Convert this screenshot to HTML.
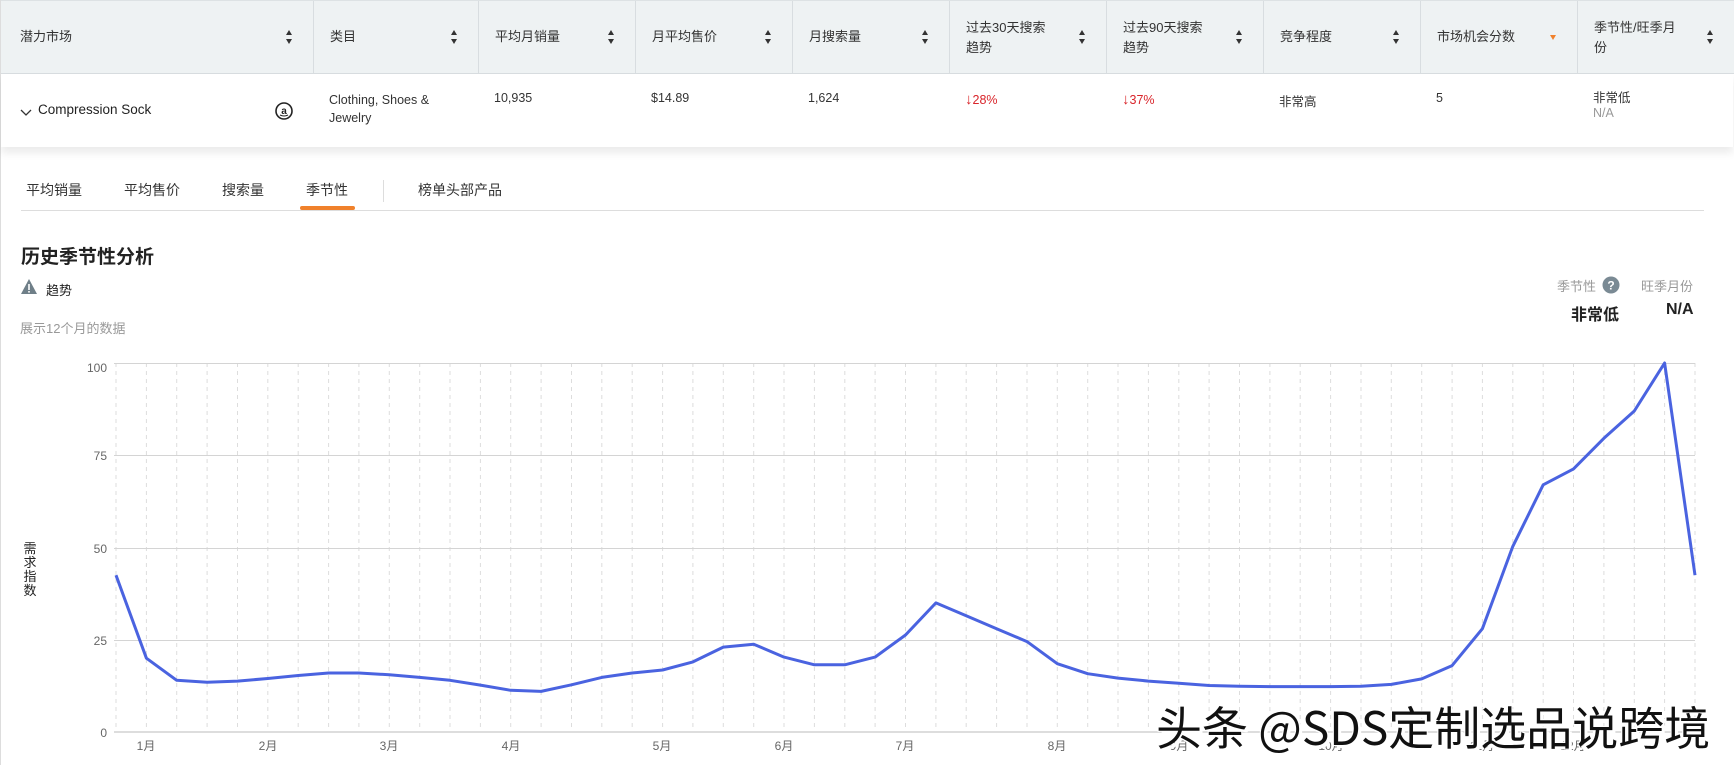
<!DOCTYPE html>
<html><head><meta charset="utf-8">
<style>
*{margin:0;padding:0;box-sizing:border-box}
body{width:1734px;height:765px;overflow:hidden;background:#fff;font-family:"Liberation Sans","Noto Sans CJK SC",sans-serif;color:#333;position:relative;border-left:1px solid #ddd}
.a{position:absolute;white-space:nowrap}
.hdr{position:absolute;left:0;top:0;width:1734px;height:74px;background:#eef2f3;border-top:1px solid #dde2e4;border-bottom:1px solid #d8dde0}
.row{position:absolute;left:0;top:74px;width:1732px;height:73px;background:#fff;box-shadow:0 6px 8px rgba(0,0,0,.08)}
.vl{position:absolute;top:0;width:1px;height:74px;background:#d8dde0}
.h{font-size:13px;color:#333;line-height:20px}
.c{font-size:12.5px;color:#333}
.tab{font-size:14px;color:#333}
</style></head><body>
<div class="hdr">
<div class="vl" style="left:312px"></div><div class="vl" style="left:477px"></div><div class="vl" style="left:634px"></div><div class="vl" style="left:791px"></div><div class="vl" style="left:948px"></div><div class="vl" style="left:1105px"></div><div class="vl" style="left:1262px"></div><div class="vl" style="left:1419px"></div><div class="vl" style="left:1576px"></div>
</div>
<div class="row"></div>
<div class="a h" style="left:19px;top:27px">潜力市场</div>
<div class="a h" style="left:329px;top:27px">类目</div>
<div class="a h" style="left:494px;top:27px">平均月销量</div>
<div class="a h" style="left:651px;top:27px">月平均售价</div>
<div class="a h" style="left:808px;top:27px">月搜索量</div>
<div class="a h" style="left:965px;top:18px">过去30天搜索<br>趋势</div>
<div class="a h" style="left:1122px;top:18px">过去90天搜索<br>趋势</div>
<div class="a h" style="left:1279px;top:27px">竞争程度</div>
<div class="a h" style="left:1436px;top:27px">市场机会分数</div>
<div class="a h" style="left:1593px;top:18px">季节性/旺季月<br>份</div>
<svg class="a" style="left:0;top:0" width="1734" height="74">
<g fill="#333">
<path d="M285 35l3-5 3 5zM285 39l3 5 3-5z"/>
<path d="M450 35l3-5 3 5zM450 39l3 5 3-5z"/>
<path d="M607 35l3-5 3 5zM607 39l3 5 3-5z"/>
<path d="M764 35l3-5 3 5zM764 39l3 5 3-5z"/>
<path d="M921 35l3-5 3 5zM921 39l3 5 3-5z"/>
<path d="M1078 35l3-5 3 5zM1078 39l3 5 3-5z"/>
<path d="M1235 35l3-5 3 5zM1235 39l3 5 3-5z"/>
<path d="M1392 35l3-5 3 5zM1392 39l3 5 3-5z"/>
<path d="M1706 35l3-5 3 5zM1706 39l3 5 3-5z"/>
</g>
<path d="M1549 35l3 5 3-5z" fill="#f0812b"/>
</svg>
<svg class="a" style="left:19px;top:108px" width="12" height="10"><path d="M1 2l5 5 5-5" fill="none" stroke="#333" stroke-width="1.3"/></svg>
<div class="a" style="left:37px;top:102px;font-size:13.5px;color:#222">Compression Sock</div>
<svg class="a" style="left:274px;top:101px" width="18" height="20"><circle cx="9" cy="10" r="8" fill="none" stroke="#222" stroke-width="1.6"/><text x="9" y="13" font-size="10" font-family="Liberation Sans" font-weight="bold" text-anchor="middle" fill="#222">a</text><path d="M5 14q4 2 8 0" fill="none" stroke="#222" stroke-width="1"/></svg>
<div class="a c" style="left:328px;top:91px;line-height:18px">Clothing, Shoes &amp;<br>Jewelry</div>
<div class="a c" style="left:493px;top:91px">10,935</div>
<div class="a c" style="left:650px;top:91px">$14.89</div>
<div class="a c" style="left:807px;top:91px">1,624</div>
<div class="a c" style="left:964px;top:91px;color:#d9252b"><b style="font-size:15px">↓</b>28%</div>
<div class="a c" style="left:1121px;top:91px;color:#d9252b"><b style="font-size:15px">↓</b>37%</div>
<div class="a c" style="left:1278px;top:91px">非常高</div>
<div class="a c" style="left:1435px;top:91px">5</div>
<div class="a c" style="left:1592px;top:87px">非常低</div>
<div class="a c" style="left:1592px;top:106px;color:#999">N/A</div>
<div class="a tab" style="left:25px;top:180px">平均销量</div>
<div class="a tab" style="left:123px;top:180px">平均售价</div>
<div class="a tab" style="left:221px;top:180px">搜索量</div>
<div class="a tab" style="left:305px;top:180px">季节性</div>
<div class="a" style="left:382px;top:180px;width:1px;height:22px;background:#ddd"></div>
<div class="a tab" style="left:417px;top:180px">榜单头部产品</div>
<div class="a" style="left:20px;top:210px;width:1683px;height:1px;background:#ddd"></div>
<div class="a" style="left:299px;top:206px;width:55px;height:4px;background:#f0812b;border-radius:2px"></div>
<div class="a" style="left:20px;top:242px;font-size:19px;font-weight:bold;color:#222">历史季节性分析</div>
<svg class="a" style="left:19px;top:278px" width="18" height="17"><path d="M9 1L17 16H1z" fill="#6f7f88"/><rect x="8.2" y="6" width="1.6" height="6" fill="#fff"/><rect x="8.2" y="13" width="1.6" height="1.6" fill="#fff"/></svg>
<div class="a" style="left:45px;top:280px;font-size:13px;color:#222">趋势</div>
<div class="a" style="left:19px;top:318px;font-size:13px;color:#999">展示12个月的数据</div>
<div class="a" style="left:1556px;top:276px;font-size:13px;color:#999">季节性</div>
<svg class="a" style="left:1601px;top:276px" width="18" height="18"><circle cx="9" cy="9" r="8.5" fill="#7a8a94"/><text x="9" y="13.5" font-size="12" font-weight="bold" font-family="Liberation Sans" text-anchor="middle" fill="#fff">?</text></svg>
<div class="a" style="left:1640px;top:276px;font-size:13px;color:#999">旺季月份</div>
<div class="a" style="left:1570px;top:301px;font-size:16px;font-weight:bold;color:#222">非常低</div>
<div class="a" style="left:1665px;top:301px;font-size:16px;font-weight:bold;color:#222">N/A</div>
<svg class="a" style="left:0;top:340px" width="1734" height="425" viewBox="0 340 1734 425">
<g stroke="#ddd" stroke-dasharray="4,4" stroke-width="1">
<path d="M115 363V732M145.4 363V732M175.7 363V732M206.1 363V732M236.5 363V732M266.8 363V732M297.2 363V732M327.6 363V732M357.9 363V732M388.3 363V732M418.7 363V732M449 363V732M479.4 363V732M509.7 363V732M540.1 363V732M570.5 363V732M600.8 363V732M631.2 363V732M661.6 363V732M691.9 363V732M722.3 363V732M752.7 363V732M783 363V732M813.4 363V732M843.8 363V732M874.1 363V732M904.5 363V732M934.9 363V732M965.2 363V732M995.6 363V732M1026 363V732M1056.3 363V732M1086.7 363V732M1117 363V732M1147.4 363V732M1177.8 363V732M1208.1 363V732M1238.5 363V732M1268.9 363V732M1299.2 363V732M1329.6 363V732M1360 363V732M1390.3 363V732M1420.7 363V732M1451.1 363V732M1481.4 363V732M1511.8 363V732M1542.2 363V732M1572.5 363V732M1602.9 363V732M1633.3 363V732M1663.6 363V732M1694 363V732"/>
</g>
<g stroke="#d4d4d4" stroke-width="1">
<path d="M113 363.5H1694M113 455.5H1694M113 548.5H1694M113 640.5H1694"/>
</g>
<path d="M113 732H1694" stroke="#ddd" stroke-width="2"/>
<g font-size="12" fill="#666" font-family="Liberation Sans" text-anchor="end">
<text x="106" y="372">100</text><text x="106" y="460">75</text><text x="106" y="553">50</text><text x="106" y="645">25</text><text x="106" y="737">0</text>
</g>
<g font-size="12" fill="#666" font-family="Liberation Sans,Noto Sans CJK SC,sans-serif" text-anchor="middle">
<text x="145" y="750">1月</text><text x="267" y="750">2月</text><text x="388" y="750">3月</text><text x="510" y="750">4月</text><text x="661" y="750">5月</text><text x="783" y="750">6月</text><text x="904" y="750">7月</text><text x="1056" y="750">8月</text><text x="1178" y="750">9月</text><text x="1330" y="750">10月</text><text x="1481" y="750">11月</text><text x="1572" y="750">12月</text>
</g>
<g font-size="13" fill="#222" font-family="Noto Sans CJK SC,sans-serif" text-anchor="middle">
<text x="29" y="553">需</text><text x="29" y="567">求</text><text x="29" y="581">指</text><text x="29" y="595">数</text>
</g>
<polyline fill="none" stroke="#4a63e0" stroke-width="3" stroke-linejoin="round" points="115,575.2 145.4,658.2 175.7,680.3 206.1,682.2 236.5,681.1 266.8,678.5 297.2,675.5 327.6,673 357.9,673 388.3,674.8 418.7,677.4 449,680.3 479.4,685.1 509.7,690.3 540.1,691.4 570.5,684.8 600.8,677.4 631.2,673 661.6,670 691.9,661.9 722.3,647.1 752.7,644.2 783,657.1 813.4,664.8 843.8,664.8 874.1,657.1 904.5,635 934.9,602.9 965.2,615.8 995.6,628.7 1026,641.6 1056.3,663.7 1086.7,673.7 1117,678.1 1147.4,681.1 1177.8,683.3 1208.1,685.5 1238.5,686.2 1268.9,686.6 1299.2,686.6 1329.6,686.6 1360,686.2 1390.3,684.4 1420.7,678.9 1451.1,665.6 1481.4,628.7 1511.8,546.4 1542.2,484.8 1572.5,468.9 1602.9,438.3 1633.3,411 1663.6,363 1694,575.2"/>
</svg>
<div class="a" style="left:1155px;top:698px;font-size:46px;color:#111;font-family:'Noto Sans CJK SC','Liberation Sans',sans-serif;line-height:56px;text-shadow:3px 3px 0 #fff,-1px -1px 0 #fff,1px -1px 0 #fff,-1px 1px 0 #fff">头条 @SDS定制选品说跨境</div>
</body></html>
